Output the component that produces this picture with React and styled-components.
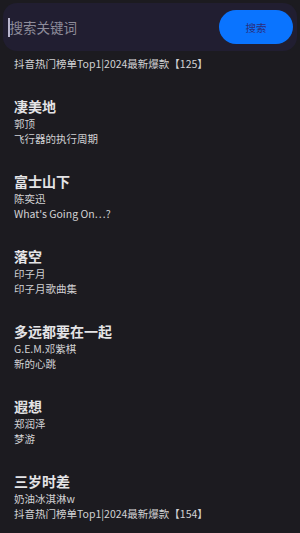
import React from 'react';
import { createGlobalStyle, styled } from 'styled-components';

const songs = [
  { title: '凄美地', artist: '郭顶', album: '飞行器的执行周期' },
  { title: '富士山下', artist: '陈奕迅', album: "What's Going On⋯?" },
  { title: '落空', artist: '印子月', album: '印子月歌曲集' },
  { title: '多远都要在一起', artist: 'G.E.M.邓紫棋', album: '新的心跳' },
  { title: '遐想', artist: '郑润泽', album: '梦游' },
  { title: '三岁时差', artist: '奶油冰淇淋w', album: '抖音热门榜单Top1|2024最新爆款【154】' },
];

const App = () => {
  return (
    <>
      <GlobalStyle />
      <Page>
        <Header>
          <SearchBox>
            <Cursor />
            <Placeholder>搜索关键词</Placeholder>
            <SearchButton>搜索</SearchButton>
          </SearchBox>
        </Header>
        <List>
          <Tail>
            <SubLine>抖音热门榜单Top1|2024最新爆款【125】</SubLine>
          </Tail>
          {songs.map((s) => (
            <Item key={s.title}>
              <Title>{s.title}</Title>
              <SubLine>{s.artist}</SubLine>
              <SubLine>{s.album}</SubLine>
            </Item>
          ))}
        </List>
      </Page>
    </>
  );
};

export default App;

const GlobalStyle = createGlobalStyle`
  html, body {
    margin: 0;
    padding: 0;
    background: #1c1b20;
  }
  * {
    box-sizing: border-box;
  }
`;

const Page = styled.div`
  width: 300px;
  height: 533px;
  overflow: hidden;
  background: #1c1b20;
  font-family: 'Noto Sans CJK SC', 'Noto Sans', sans-serif;
`;

const Header = styled.div`
  padding: 3px 3px 0;
`;

const SearchBox = styled.div`
  display: flex;
  align-items: center;
  height: 48px;
  padding: 0 4px 0 5px;
  border-radius: 14px;
  background: #211e31;
`;

const Cursor = styled.div`
  width: 1.5px;
  height: 19px;
  background: #b8b5cc;
`;

const Placeholder = styled.div`
  flex: 1;
  font-size: 13.5px;
  line-height: 20px;
  color: #8e8c9a;
`;

const SearchButton = styled.button`
  width: 74px;
  height: 34px;
  border: none;
  border-radius: 17px;
  background: #0a74ff;
  color: #2b2f7c;
  font-family: inherit;
  font-size: 10.5px;
  padding: 0;
`;

const List = styled.div`
  padding: 0 14px;
`;

const Tail = styled.div`
  padding-top: 4.5px;
`;

const Item = styled.div`
  padding-top: 25px;
`;

const Title = styled.div`
  font-size: 14px;
  font-weight: 700;
  line-height: 20px;
  color: #e4e4e6;
`;

const SubLine = styled.div`
  font-size: 10.5px;
  line-height: 15px;
  color: #d2d2d4;
  white-space: nowrap;
`;
